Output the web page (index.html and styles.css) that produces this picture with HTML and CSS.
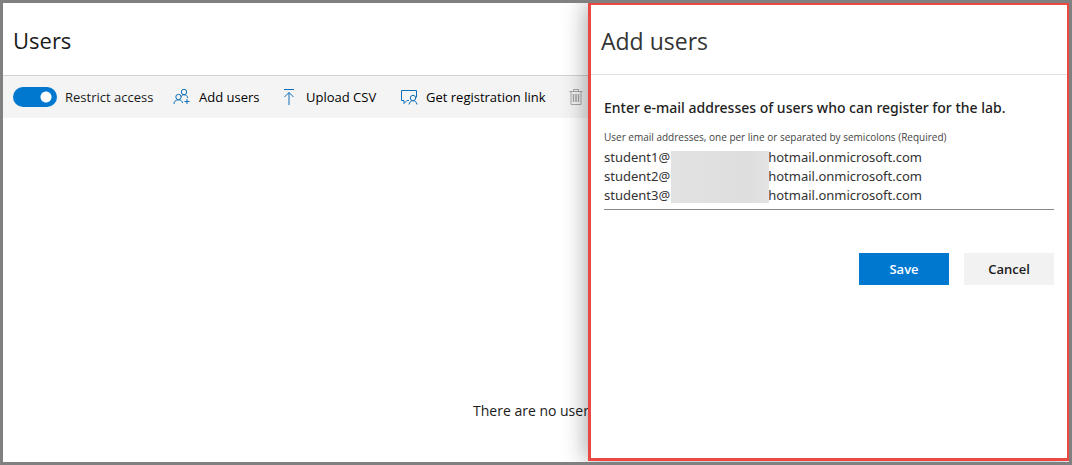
FILE: index.html
```html
<!DOCTYPE html>
<html lang="en">
<head>
<meta charset="utf-8">
<title>Users</title>
<link rel="stylesheet" href="styles.css">
</head>
<body>
<div class="app">
  <main class="page">
    <h1 class="page-title">Users</h1>
    <div class="toolbar">
      <label class="toggle"><input class="toggle-input" type="checkbox" role="switch" checked>Restrict access</label>
      <button class="tool add" type="button">
        <svg class="icon" viewBox="0 0 18 18"><circle cx="11" cy="4" r="2.700"/><circle cx="5.500" cy="9" r="2.700"/><path d="M1 16c0-2.700 1.800-4.200 4.500-4.200s3.600 1.200 4.200 3.200M8 8.700C8.700 7.400 9.600 6.800 11 6.800c2.200 0 3.500 1.200 3.800 3.200M14 11v5M11.500 13.500h5"/></svg>
        Add users</button>
      <button class="tool upload" type="button">
        <svg class="icon" viewBox="0 0 18 18"><path d="M4 1.500h10M9 17V4.500M4.500 9 9 4.500 13.500 9"/></svg>
        Upload CSV</button>
      <button class="tool link" type="button">
        <svg class="icon" viewBox="0 0 18 18"><path d="M9 12.500H7L4 15.500v-3H1.500v-10h15v7"/><circle cx="13" cy="10" r="2.700"/><path d="M9 16.500c.3-2.300 1.800-3.800 4-3.800s3.700 1.500 4 3.800"/></svg>
        Get registration link</button>
      <button class="tool delete" type="button" aria-label="Delete" disabled>
        <svg class="icon" viewBox="0 0 18 18"><path d="M2.500 3.500h13M6.500 3.500v-2h5v2M4 3.500v13h10v-13"/><path d="M6.500 6v8M9 6v8M11.500 6v8" stroke-width="1.500"/></svg>
      </button>
    </div>
    <p class="empty">There are no users</p>
  </main>
  <aside class="panel">
    <h2 class="panel-title">Add users</h2>
    <form class="form">
      <p class="lead">Enter e-mail addresses of users who can register for the lab.</p>
      <label class="field-label" for="emails">User email addresses, one per line or separated by semicolons (Required)</label>
      <div class="field">
        <textarea class="emails" id="emails" rows="3" spellcheck="false">student1@                             hotmail.onmicrosoft.com
student2@                             hotmail.onmicrosoft.com
student3@                             hotmail.onmicrosoft.com</textarea>
        <span class="mask"></span>
      </div>
      <div class="actions">
        <button class="button primary" type="button">Save</button>
        <button class="button" type="button">Cancel</button>
      </div>
    </form>
  </aside>
</div>
</body>
</html>
```
FILE: styles.css
```css
* { box-sizing: border-box; }
body {
  margin: 0;
  font: 13px/20px "Open Sans", "Noto Sans", sans-serif;
  color: #1b1b1b;
}
button, textarea { font: inherit; color: inherit; }
.app {
  position: relative;
  min-height: 100vh;
  border: 3px solid #808080;
  overflow: hidden;
}
.page-title {
  margin: 0;
  padding: 21px 10px 19px;
  border-bottom: 1px solid #d2d2d2;
  font-size: 22px;
  line-height: 32px;
  font-weight: 400;
}
.toolbar {
  display: flex;
  align-items: center;
  height: 42px;
  padding-left: 10px;
  background: #f4f4f4;
  white-space: nowrap;
}
.toggle { display: flex; align-items: center; gap: 8px; width: 160px; }
.toggle-input {
  appearance: none;
  width: 44px;
  height: 20px;
  margin: 0;
  border-radius: 10px;
  background: radial-gradient(circle at 33px 10px, #fff 5px, #0078d0 6px);
}
.tool {
  display: flex;
  align-items: center;
  gap: 8px;
  padding: 0;
  border: 0;
  background: none;
  color: #000;
}
.toggle, .tool { line-height: 22px; }
.add { width: 107px; }
.upload { width: 120px; }
.link { width: 167px; }
.icon { width: 18px; height: 18px; fill: none; stroke: #0f6fb8; }
.delete .icon { stroke: #a6a6a6; }
.empty { margin: 283px 0 0; padding-left: 470px; font-size: 14px; }
.panel {
  position: absolute;
  top: -1px;
  right: -1px;
  bottom: 1px;
  width: 482px;
  border: 3px solid #eb4743;
  background: #fff;
  box-shadow: 0 0 24px rgba(0, 0, 0, .4);
}
.panel-title {
  margin: 0;
  padding: 20px 10px 17px;
  border-bottom: 1px solid #e0e0e0;
  font-size: 23px;
  line-height: 32px;
  font-weight: 400;
  color: #333;
}
.form { padding: 23px 13px; }
.lead { margin: 0; font-family: "Noto Sans", sans-serif; font-size: 14px; font-weight: 500; color: #222; }
.field-label { display: block; margin-top: 10px; font-size: 10px; line-height: 18px; color: #444; }
.field { position: relative; }
.emails {
  display: block;
  width: 100%;
  height: 64px;
  padding: 2px 0;
  border: 0;
  border-bottom: 1px solid #8a8a8a;
  background: none;
  font-family: "Noto Sans", sans-serif;
  line-height: 19px;
  color: #333;
  resize: none;
  overflow: hidden;
  outline: 0;
  white-space: pre;
}
.mask {
  position: absolute;
  left: 67px;
  top: 5px;
  width: 98px;
  height: 52px;
  background: linear-gradient(90deg, #e2e2e2, #dedede 80%, #e4e4e4);
}
.actions { display: flex; justify-content: flex-end; gap: 15px; margin-top: 43px; }
.button {
  width: 90px;
  height: 32px;
  padding: 0;
  border: 0;
  background: #f2f2f2;
  font-weight: 600;
  font-size: 13px;
}
.primary { background: #0078d0; color: #fff; }
```
